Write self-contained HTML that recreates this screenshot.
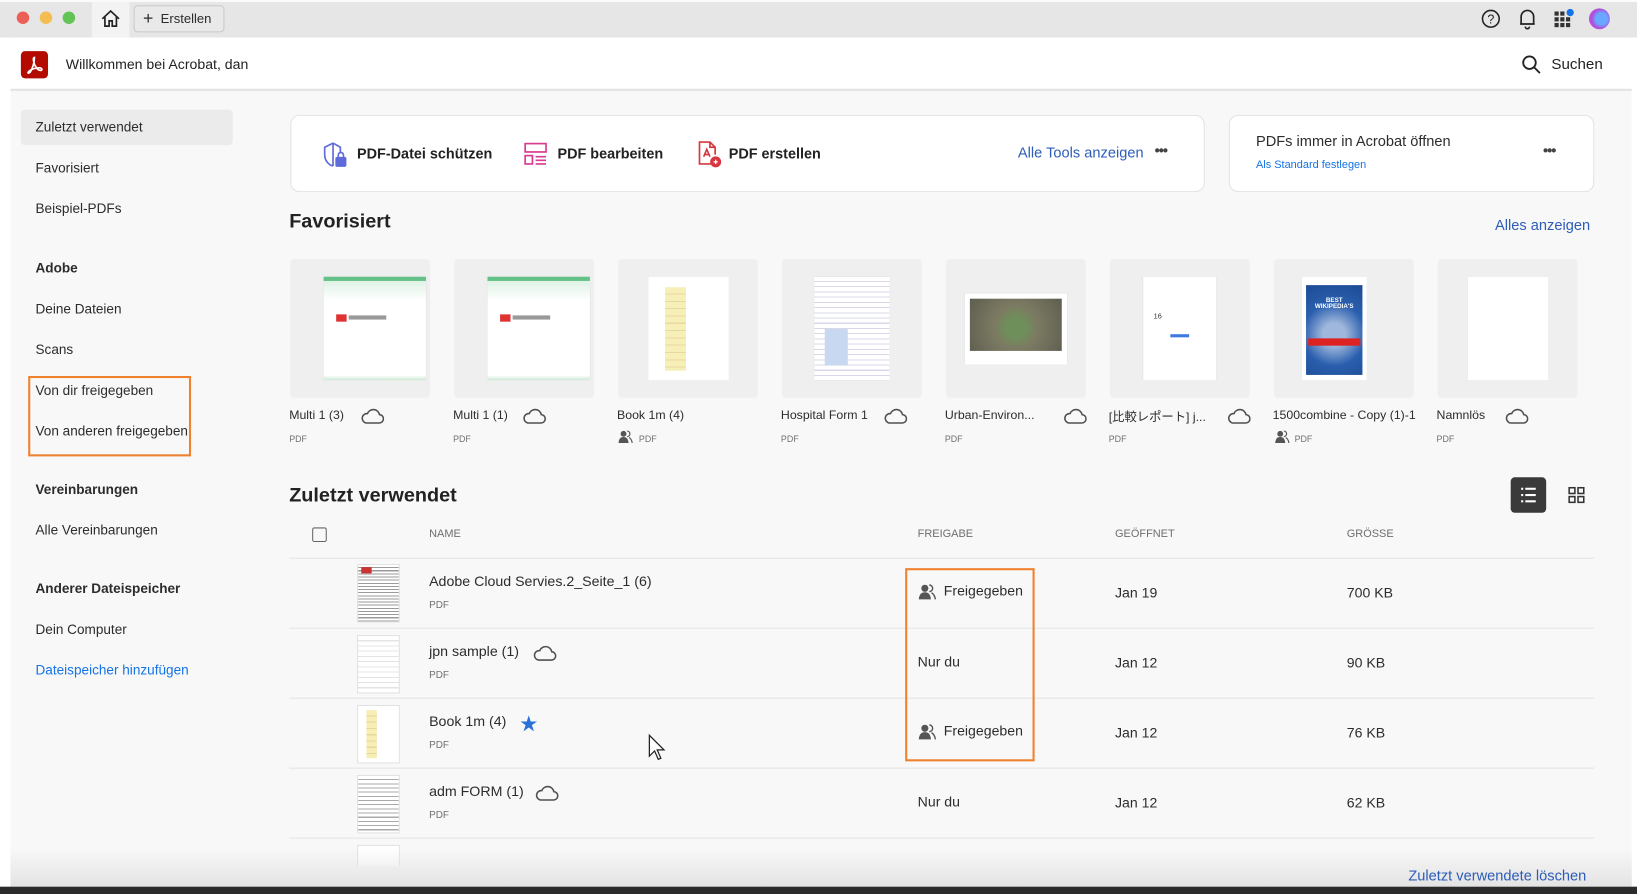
<!DOCTYPE html>
<html><head><meta charset="utf-8"><style>
*{margin:0;padding:0;box-sizing:border-box}
html,body{width:1637px;height:894px;overflow:hidden;background:#fff}
body{font-family:"Liberation Sans","Noto Sans CJK JP",sans-serif;color:#2c2c2c}
#w{position:absolute;left:0;top:0;width:1568px;height:856px;transform:scale(1.04401,1.04439);transform-origin:0 0;background:#f8f8f8}
.a{position:absolute;white-space:nowrap}
.side{font-size:13px;color:#2c2c2c}
.b{font-weight:bold}
.blue{color:#1473e6}
.dblue{color:#2d5cb8}
.card{position:absolute;background:#fff;border:1px solid #e3e3e3;border-radius:9px}
.fav{position:absolute;top:248px;width:134px;height:133px;background:#efefef;border-radius:4px}
.fav .t{position:absolute;left:32px;top:17px;width:98px;height:99px;background:#fff;box-shadow:0 0 1px #ccc}
.fn{position:absolute;top:390px;font-size:11.8px;color:#2c2c2c}
.fp{position:absolute;top:415px;font-size:8.5px;color:#707070}
.th{position:absolute;top:505px;font-size:10.5px;color:#6e6e6e}
.line{position:absolute;left:277px;width:1250px;height:1px;background:#e4e4e4}
.thumb{position:absolute;left:342px;width:41px;height:56px;background:#fff;border:1px solid #e2e2e2}
.rn{position:absolute;left:411px;font-size:13.6px;color:#2c2c2c}
.rp{position:absolute;left:411px;font-size:9.5px;color:#707070}
.rc{position:absolute;font-size:13.5px;color:#2c2c2c}
</style></head><body><div id="w">
<div class="a" style="left:0;top:0;width:1568px;height:36px;background:#e6e6e6;border-top:2px solid #fafafa"></div>
<div class="a" style="left:88px;top:2px;width:36px;height:34px;background:#f3f3f3"></div>
<div class="a" style="left:16px;top:11px;width:12px;height:12px;border-radius:50%;background:#ec5f57"></div>
<div class="a" style="left:38px;top:11px;width:12px;height:12px;border-radius:50%;background:#f4bd4f"></div>
<div class="a" style="left:60px;top:11px;width:12px;height:12px;border-radius:50%;background:#61c454"></div>
<svg class="a" style="left:96px;top:8px" width="20" height="20" viewBox="0 0 20 20" fill="none" stroke="#222" stroke-width="1.6"><path d="M2 10 L10 2.5 L18 10 M4.5 8 V17 H8.5 V12 H11.5 V17 H15.5 V8"/></svg>
<div class="a" style="left:128px;top:5px;width:87px;height:26px;border:1px solid #c9c9c9;border-radius:4px;background:#e9e9e9;font-size:12.5px;line-height:24px;padding-left:8px"><span style="font-size:17px;vertical-align:-1px">+</span>&nbsp; Erstellen</div>
<svg class="a" style="left:1418px;top:8px" width="20" height="20" viewBox="0 0 20 20"><circle cx="10" cy="10" r="8" fill="none" stroke="#222" stroke-width="1.5"/><text x="10" y="14.5" font-size="12" text-anchor="middle" font-family="Liberation Sans" fill="#222">?</text></svg>
<svg class="a" style="left:1453px;top:7px" width="20" height="22" viewBox="0 0 20 22" fill="none" stroke="#222" stroke-width="1.6"><path d="M4 16 V9 a6 6 0 0 1 12 0 V16 H3 H17 M8 18.5 a2 2 0 0 0 4 0"/></svg>
<svg class="a" style="left:1488px;top:8px" width="22" height="20" viewBox="0 0 22 20" fill="#333"><g><rect x="1" y="3" width="4" height="4"/><rect x="6.5" y="3" width="4" height="4"/><rect x="1" y="8.5" width="4" height="4"/><rect x="6.5" y="8.5" width="4" height="4"/><rect x="12" y="8.5" width="4" height="4"/><rect x="1" y="14" width="4" height="4"/><rect x="6.5" y="14" width="4" height="4"/><rect x="12" y="14" width="4" height="4"/></g><circle cx="16" cy="4" r="3.5" fill="#1473e6"/></svg>
<div class="a" style="left:1522px;top:8px;width:20px;height:20px;border-radius:50%;background:radial-gradient(circle at 60% 50%,#6aa8ff 0 35%,#b04ce0 60%,#e055c8)"></div>
<div class="a" style="left:10px;top:36px;width:1553px;height:51px;background:#fff;border-bottom:2px solid #e2e2e2"></div>
<div class="a" style="left:1563px;top:36px;width:5px;height:820px;background:#fff"></div>
<div class="a" style="left:0;top:36px;width:10px;height:820px;background:#fff"></div>
<div class="a" style="left:20px;top:49px;width:26px;height:26px;border-radius:4px;background:#b30b00"></div>
<svg class="a" style="left:20px;top:49px" width="26" height="26" viewBox="0 0 26 26" fill="none" stroke="#fff" stroke-width="1.6"><path d="M13 6 C11 6 12 12 15 16 C17 19 21 19 20 17 C19 15 12 16 8 19 C6 21 7 22 9 20 C11 17 13 11 13 6Z"/></svg>
<div class="a" style="left:63px;top:54px;font-size:13.5px;color:#222">Willkommen bei Acrobat, dan</div>
<svg class="a" style="left:1457px;top:52px" width="20" height="20" viewBox="0 0 20 20" fill="none" stroke="#222" stroke-width="1.8"><circle cx="8" cy="8" r="6"/><path d="M12.5 12.5 L18 18"/></svg>
<div class="a" style="left:1486px;top:54px;font-size:14.5px;color:#222">Suchen</div>
<div class="a" style="left:20px;top:105px;width:203px;height:34px;background:#ebebeb;border-radius:4px"></div>
<div class="a side" style="left:34px;top:114px">Zuletzt verwendet</div>
<div class="a side" style="left:34px;top:153px">Favorisiert</div>
<div class="a side" style="left:34px;top:192px">Beispiel-PDFs</div>
<div class="a side b" style="left:34px;top:249px">Adobe</div>
<div class="a side" style="left:34px;top:288px">Deine Dateien</div>
<div class="a side" style="left:34px;top:327px">Scans</div>
<div class="a side" style="left:34px;top:366px">Von dir freigegeben</div>
<div class="a side" style="left:34px;top:405px">Von anderen freigegeben</div>
<div class="a" style="left:27px;top:360px;width:156px;height:77px;border:2px solid #f0812f"></div>
<div class="a side b" style="left:34px;top:461px">Vereinbarungen</div>
<div class="a side" style="left:34px;top:500px">Alle Vereinbarungen</div>
<div class="a side b" style="left:34px;top:556px">Anderer Dateispeicher</div>
<div class="a side" style="left:34px;top:595px">Dein Computer</div>
<div class="a side blue" style="left:34px;top:634px">Dateispeicher hinzufügen</div>
<div class="card" style="left:278px;top:110px;width:876px;height:74px"></div>
<svg class="a" style="left:308px;top:134px" width="28" height="28" viewBox="0 0 28 28" fill="none" stroke="#5f6bd8" stroke-width="1.6"><path d="M11 3 L3 7 V14 C3 20 7 24 11 25 M11 3 L18 7 V12 M11 3 V25"/><rect x="14" y="17" width="9" height="8" rx="1" fill="#5f6bd8"/><path d="M16 17 V14.5 a2.5 2.5 0 0 1 5 0 V17"/></svg>
<div class="a b" style="left:342px;top:140px;font-size:13.8px;color:#222">PDF-Datei schützen</div>
<svg class="a" style="left:501px;top:136px" width="24" height="24" viewBox="0 0 24 24" fill="none" stroke="#d93b8f" stroke-width="1.6"><rect x="2" y="1.5" width="20" height="8"/><rect x="2" y="13" width="7" height="8"/><path d="M12 14 H22 M12 17.5 H22 M12 21 H22"/></svg>
<div class="a b" style="left:534px;top:140px;font-size:13.8px;color:#222">PDF bearbeiten</div>
<svg class="a" style="left:667px;top:134px" width="24" height="28" viewBox="0 0 24 28" fill="none" stroke="#d7373f" stroke-width="1.6"><path d="M14 23 H3 V2 H13 L18 7 V14 M13 2 V7 H18 M7 16 L10 9 L13 16 M8 14 H12"/><circle cx="18.5" cy="21" r="4.5" fill="#d7373f"/><path d="M16.5 21 H20.5 M18.5 19 V23" stroke="#fff" stroke-width="1.3"/></svg>
<div class="a b" style="left:698px;top:140px;font-size:13.8px;color:#222">PDF erstellen</div>
<div class="a dblue" style="left:975px;top:138px;font-size:14px">Alle Tools anzeigen</div>
<div class="a" style="left:1106px;top:136px;font-size:14px;font-weight:bold;letter-spacing:-1px;color:#444">•••</div>
<div class="card" style="left:1177px;top:110px;width:350px;height:74px"></div>
<div class="a" style="left:1203px;top:127px;font-size:14px;color:#2c2c2c">PDFs immer in Acrobat öffnen</div>
<div class="a" style="left:1203px;top:152px;font-size:10.5px;color:#1473e6">Als Standard festlegen</div>
<div class="a" style="left:1478px;top:136px;font-size:14px;font-weight:bold;letter-spacing:-1px;color:#444">•••</div>
<div class="a b" style="left:277px;top:202px;font-size:19px;color:#222">Favorisiert</div>
<div class="a dblue" style="left:1432px;top:207px;font-size:14px">Alles anzeigen</div>
<div class="fav" style="left:278px"><div class="t" style="border-top:4px solid #64c187;background:linear-gradient(#dff2e5,#fff 20%,#fff 95%,#cfe9d6)"><div style="position:absolute;left:12px;top:32px;width:10px;height:7px;background:#d33"></div><div style="position:absolute;left:24px;top:33px;width:36px;height:4px;background:#999"></div></div></div>
<div class="fav" style="left:435px"><div class="t" style="border-top:4px solid #64c187;background:linear-gradient(#dff2e5,#fff 20%,#fff 95%,#cfe9d6)"><div style="position:absolute;left:12px;top:32px;width:10px;height:7px;background:#d33"></div><div style="position:absolute;left:24px;top:33px;width:36px;height:4px;background:#999"></div></div></div>
<div class="fav" style="left:592px"><div class="t" style="left:29px;width:77px"><div style="position:absolute;left:16px;top:10px;width:20px;height:80px;background:repeating-linear-gradient(#f7efb8 0 6px,#e8d9a0 6px 7px)"></div></div></div>
<div class="fav" style="left:749px"><div class="t" style="left:31px;width:72px;background:repeating-linear-gradient(#fff 0 4px,#d8d8e8 4px 5px)"><div style="position:absolute;left:10px;top:50px;width:22px;height:35px;background:#c8d8f0"></div></div></div>
<div class="fav" style="left:906px"><div class="t" style="left:18px;top:33px;width:98px;height:68px;background:#fff"><div style="position:absolute;left:5px;top:5px;width:88px;height:50px;background:radial-gradient(circle at 50% 55%,#6f8f5a 0 18%,#7c7a62 40%,#5e5e50)"></div></div></div>
<div class="fav" style="left:1063px"><div class="t" style="left:32px;width:70px"><div style="position:absolute;left:10px;top:35px;font-size:7px;color:#333">16</div><div style="position:absolute;left:26px;top:55px;width:18px;height:3px;background:#3d7be0"></div></div></div>
<div class="fav" style="left:1220px"><div class="t" style="left:27px;width:62px"><div style="position:absolute;left:4px;top:8px;width:54px;height:86px;background:radial-gradient(circle at 50% 55%,#9fb7dc 0 20%,#2a5fae 55%,#1c4a92)"></div><div style="position:absolute;left:4px;top:20px;width:54px;font-size:6px;color:#fff;font-weight:bold;text-align:center">BEST<br>WIKIPEDIA'S</div><div style="position:absolute;left:6px;top:59px;width:50px;height:7px;background:#d22"></div></div></div>
<div class="fav" style="left:1377px"><div class="t" style="left:29px;width:77px"></div></div>
<svg width="0" height="0" style="position:absolute"><defs><symbol id="cl" viewBox="0 0 22 16"><path d="M5 14 H17 a4 4 0 0 0 0.5-8 A6 6 0 0 0 6 5 A4.5 4.5 0 0 0 5 14Z" fill="none" stroke="#505050" stroke-width="1.5"/></symbol><symbol id="pp" viewBox="0 0 16 16"><circle cx="6" cy="5" r="3.2" fill="#555"/><path d="M0.5 15 C1 10 3 8.5 6 8.5 C9 8.5 11 10 11.5 15Z" fill="#555"/><path d="M10 2 a3 3 0 0 1 0 6 M12 9 C14 10 15 12 15.5 15" fill="none" stroke="#555" stroke-width="1.3"/></symbol></defs></svg>
<div class="fn" style="left:277px">Multi 1 (3)</div><svg class="a" style="left:346px;top:391px" width="22" height="16"><use href="#cl"/></svg><div class="fp" style="left:277px">PDF</div>
<div class="fn" style="left:434px">Multi 1 (1)</div><svg class="a" style="left:501px;top:391px" width="22" height="16"><use href="#cl"/></svg><div class="fp" style="left:434px">PDF</div>
<div class="fn" style="left:591px">Book 1m (4)</div><svg class="a" style="left:591px;top:411px" width="16" height="14"><use href="#pp"/></svg><div class="fp" style="left:612px">PDF</div>
<div class="fn" style="left:748px">Hospital Form 1</div><svg class="a" style="left:847px;top:391px" width="22" height="16"><use href="#cl"/></svg><div class="fp" style="left:748px">PDF</div>
<div class="fn" style="left:905px">Urban-Environ...</div><svg class="a" style="left:1019px;top:391px" width="22" height="16"><use href="#cl"/></svg><div class="fp" style="left:905px">PDF</div>
<div class="fn" style="left:1062px">[比較レポート] j...</div><svg class="a" style="left:1176px;top:391px" width="22" height="16"><use href="#cl"/></svg><div class="fp" style="left:1062px">PDF</div>
<div class="fn" style="left:1219px">1500combine - Copy (1)-1</div><svg class="a" style="left:1220px;top:411px" width="16" height="14"><use href="#pp"/></svg><div class="fp" style="left:1240px">PDF</div>
<div class="fn" style="left:1376px">Namnlös</div><svg class="a" style="left:1442px;top:391px" width="22" height="16"><use href="#cl"/></svg><div class="fp" style="left:1376px">PDF</div>
<div class="a b" style="left:277px;top:464px;font-size:19px;color:#222">Zuletzt verwendet</div>
<div class="a" style="left:1447px;top:457px;width:34px;height:34px;border-radius:4px;background:#3a3a3a"></div>
<svg class="a" style="left:1455px;top:465px" width="18" height="18" viewBox="0 0 18 18" fill="#fff"><rect x="2" y="2" width="2" height="2"/><rect x="6" y="2" width="10" height="2"/><rect x="2" y="8" width="2" height="2"/><rect x="6" y="8" width="10" height="2"/><rect x="2" y="14" width="2" height="2"/><rect x="6" y="14" width="10" height="2"/></svg>
<svg class="a" style="left:1502px;top:466px" width="16" height="16" viewBox="0 0 16 16" fill="none" stroke="#333" stroke-width="1.5"><rect x="1" y="1" width="5.5" height="5.5"/><rect x="9.5" y="1" width="5.5" height="5.5"/><rect x="1" y="9.5" width="5.5" height="5.5"/><rect x="9.5" y="9.5" width="5.5" height="5.5"/></svg>
<div class="a" style="left:299px;top:505px;width:14px;height:14px;border:1.5px solid #666;border-radius:2px"></div>
<div class="th" style="left:411px">NAME</div>
<div class="th" style="left:879px">FREIGABE</div>
<div class="th" style="left:1068px">GEÖFFNET</div>
<div class="th" style="left:1290px">GRÖSSE</div>
<div class="line" style="top:534px"></div>
<div class="line" style="top:601px"></div>
<div class="line" style="top:668px"></div>
<div class="line" style="top:735px"></div>
<div class="line" style="top:802px"></div>
<div class="thumb" style="top:540px;background:repeating-linear-gradient(#fff 0 2px,#9a9a9a 2px 3px)"><div style="position:absolute;left:3px;top:2px;width:10px;height:6px;background:#c33"></div></div>
<div class="rn" style="top:549px">Adobe Cloud Servies.2_Seite_1 (6)</div><div class="rp" style="top:574px">PDF</div>
<svg class="a" style="left:879px;top:558px" width="18" height="17"><use href="#pp"/></svg><div class="rc" style="left:904px;top:558px">Freigegeben</div>
<div class="rc" style="left:1068px;top:560px">Jan 19</div><div class="rc" style="left:1290px;top:560px">700 KB</div>
<div class="thumb" style="top:608px;background:repeating-linear-gradient(#fff 0 4px,#e4e4e4 4px 5px)"></div>
<div class="rn" style="top:616px">jpn sample (1)</div><svg class="a" style="left:511px;top:618px" width="22" height="16"><use href="#cl"/></svg><div class="rp" style="top:641px">PDF</div>
<div class="rc" style="left:879px;top:626px">Nur du</div><div class="rc" style="left:1068px;top:627px">Jan 12</div><div class="rc" style="left:1290px;top:627px">90 KB</div>
<div class="thumb" style="top:675px"><div style="position:absolute;left:8px;top:4px;width:10px;height:46px;background:repeating-linear-gradient(#f6eeb5 0 5px,#e5d79e 5px 6px)"></div></div>
<div class="rn" style="top:683px">Book 1m (4)</div><div class="a" style="left:498px;top:679px;font-size:17px;color:#2a72d9">★</div><div class="rp" style="top:708px">PDF</div>
<svg class="a" style="left:879px;top:692px" width="18" height="17"><use href="#pp"/></svg><div class="rc" style="left:904px;top:692px">Freigegeben</div>
<div class="rc" style="left:1068px;top:694px">Jan 12</div><div class="rc" style="left:1290px;top:694px">76 KB</div>
<svg class="a" style="left:620px;top:702px" width="20" height="28" viewBox="0 0 20 28"><path d="M2 2 L2 22 L7 17 L10.5 25 L13 24 L9.5 16 L16 16Z" fill="#fff" stroke="#222" stroke-width="1.2"/></svg>
<div class="thumb" style="top:742px;background:repeating-linear-gradient(#fff 0 3px,#aaa 3px 4px)"></div>
<div class="rn" style="top:750px">adm FORM (1)</div><svg class="a" style="left:513px;top:752px" width="22" height="16"><use href="#cl"/></svg><div class="rp" style="top:775px">PDF</div>
<div class="rc" style="left:879px;top:760px">Nur du</div><div class="rc" style="left:1068px;top:761px">Jan 12</div><div class="rc" style="left:1290px;top:761px">62 KB</div>
<div class="thumb" style="top:809px;height:20px;border-bottom:none"></div>
<div class="a" style="left:867px;top:544px;width:124px;height:185px;border:2px solid #f0812f"></div>
<div class="a" style="left:10px;top:812px;width:1553px;height:37px;background:linear-gradient(rgba(248,248,248,0),rgba(225,225,225,0.9))"></div>
<div class="a dblue" style="left:1349px;top:830px;font-size:14px">Zuletzt verwendete löschen</div>
<div class="a" style="left:0;top:849px;width:1568px;height:7px;background:#2b2b2b"></div>
</div></body></html>
